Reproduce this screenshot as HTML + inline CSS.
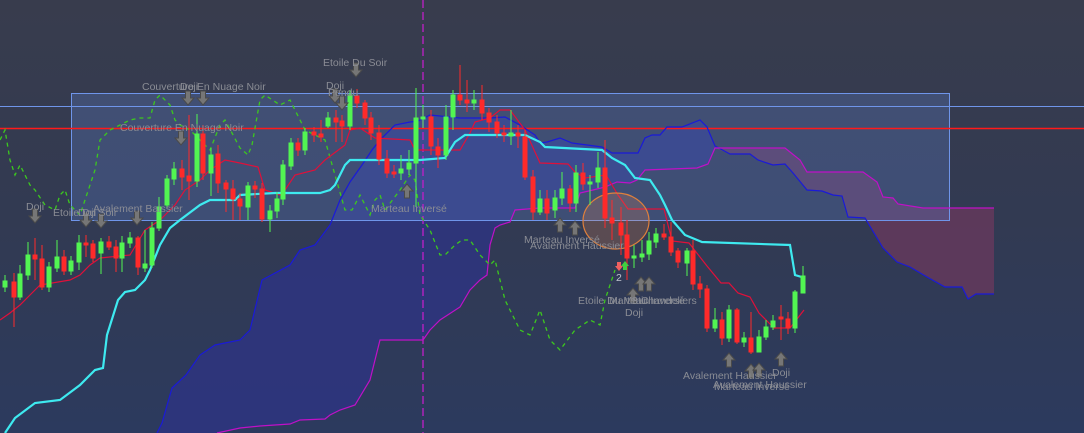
<!DOCTYPE html>
<html><head><meta charset="utf-8"><style>
html,body{margin:0;padding:0;background:#30374d;}
svg{display:block}
text{font-family:"Liberation Sans",sans-serif;font-size:10.5px;fill:#8a8c94}
</style></head><body>
<svg width="1084" height="433" viewBox="0 0 1084 433" xmlns="http://www.w3.org/2000/svg">
<defs>
<linearGradient id="bg" x1="0" y1="0" x2="0" y2="1">
<stop offset="0" stop-color="#383c4d"/><stop offset="0.5" stop-color="#323a52"/><stop offset="1" stop-color="#2c3a5e"/>
</linearGradient>
<path id="ad" d="M-2.5,0 H2.5 V7 H6 L0,14 L-6,7 H-2.5 Z" fill="#767676" stroke="#4a4a4a" stroke-width="1"/>
<path id="au" d="M-2.5,14 H2.5 V7 H6 L0,0 L-6,7 H-2.5 Z" fill="#767676" stroke="#4a4a4a" stroke-width="1"/>
</defs>
<rect width="1084" height="433" fill="url(#bg)"/>

<polygon fill="#2e3580" fill-opacity="0.85" points="157,433 162,423 172,388 186,375 200,355 215,345 240,340 250,330 262,280 290,265 300,250 315,245 330,225 340,200 350,182 362,165 372,150 380,140 395,125 410,122 418,121 430,115 460,118 475,118 490,118 505,117 520,125 535,135 540,143 547,142 560,138 572,143 602,147 612,153 638,153 645,138 652,135 660,135 667,127 682,127 700,120 707,127 715,146 715,148 708,164 697,168 645,170 637,180 630,183 617,182 605,187 593,190 580,193 575,208 540,208 515,210 510,222 500,225 495,228 490,245 487,275 480,280 470,290 460,307 440,320 430,330 423,340 380,340 370,380 355,405 340,410 330,415 325,419 300,420 290,424 260,426 240,428 217,433"/>
<polygon fill="#6b3a5e" fill-opacity="0.75" points="715,148 730,154 750,154 758,160 773,165 785,164 793,173 807,190 822,191 833,195 842,196 848,217 865,218 883,248 897,262 910,267 927,277 945,287 962,287 968,299 976,294 994,294 994,208 923,208 898,204 893,198 883,197 877,182 863,172 807,172 800,160 785,148"/>

<rect x="71.5" y="93.5" width="878" height="127" fill="#5a7ac0" fill-opacity="0.32" stroke="#6f95ea" stroke-width="1"/>
<line x1="0" y1="106.5" x2="1084" y2="106.5" stroke="#6f95ea" stroke-width="1"/>
<line x1="0" y1="128.5" x2="1084" y2="128.5" stroke="#ff1a1a" stroke-width="1.5"/>
<line x1="423" y1="0" x2="423" y2="433" stroke="#c020c8" stroke-width="1.3" stroke-dasharray="8,4"/>

<polyline fill="none" stroke="#1a1ad8" stroke-width="1.2" points="157,433 162,423 172,388 186,375 200,355 215,345 240,340 250,330 262,280 290,265 300,250 315,245 330,225 340,200 350,182 362,165 372,150 380,140 395,125 410,122 418,121 430,115 460,118 490,118 505,117 520,125 535,135 540,143 547,142 560,138 572,143 602,147 612,153 638,153 645,138 652,135 660,135 667,127 682,127 700,120 707,127 715,146 730,154 750,154 758,160 773,165 785,164 793,173 807,190 822,191 833,195 842,196 848,217 865,218 883,248 897,262 910,267 927,277 945,287 962,287 968,299 976,294 994,294"/>
<polyline fill="none" stroke="#c010c8" stroke-width="1.2" points="217,433 240,428 260,426 290,424 300,420 325,419 330,415 340,410 355,405 370,380 380,340 423,340 430,330 440,320 460,307 470,290 480,280 487,275 490,245 495,228 500,225 510,222 515,210 540,208 575,208 580,193 593,190 605,187 617,182 630,183 637,180 645,170 697,168 708,164 715,148 785,148 800,160 807,172 863,172 877,182 883,197 893,198 898,204 923,208 994,208"/>

<polyline fill="none" stroke="#3cc81e" stroke-width="1.3" stroke-dasharray="4,4" points="0,140 5,130 10,160 15,175 20,165 30,185 35,190 45,205 55,210 60,195 65,190 70,205 80,215 95,170 100,140 110,130 120,125 130,120 140,118 150,118 155,100 160,95 170,105 175,120 180,125 190,130 200,140 210,150 220,125 225,120 240,148 248,155 252,145 260,100 265,95 280,105 290,100 300,120 305,130 325,140 335,175 345,210 352,210 360,195 370,215 375,200 380,195 385,210 400,190 410,175 415,180 420,215 430,230 440,255 445,255 455,245 462,240 470,240 480,255 490,265 495,260 505,300 510,310 520,330 530,335 540,310 550,340 560,350 575,330 590,320 600,325 605,300 615,270"/>

<polyline fill="none" stroke="#e0103a" stroke-width="1.2" points="0,320 10,313 20,305 30,295 40,285 70,280 80,275 90,265 100,258 130,255 145,230 160,220 175,205 185,190 200,180 210,170 225,160 240,163 258,167 265,190 280,195 285,190 295,175 315,170 325,160 345,145 350,130 360,128 375,138 410,140 415,150 460,150 470,133 475,122 490,118 500,110 510,110 525,130 540,163 568,164 575,172 585,178 606,175 618,195 628,209 664,209 672,241 689,243 707,266 721,283 729,283 738,293 750,297 759,313 774,328 790,328 804,310"/>
<polyline fill="none" stroke="#3eeaf0" stroke-width="2.2" points="5,433 15,418 35,403 60,400 80,385 95,370 103,368 107,335 118,300 125,292 135,290 145,280 150,270 160,245 170,228 180,220 200,205 210,200 235,200 240,195 275,193 320,193 330,190 335,185 345,165 350,160 420,160 445,158 455,142 465,135 525,135 540,142 545,147 602,150 612,158 625,165 635,178 650,180 660,195 665,205 672,220 685,235 702,242 790,245 795,275 805,278"/>

<ellipse cx="616" cy="221" rx="33" ry="28" fill="#e88a50" fill-opacity="0.22" stroke="#e0803c" stroke-width="1.2"/>

<g stroke="#52f552" fill="#52f552" stroke-width="1">
<line x1="5" y1="275" x2="5" y2="292"/><rect x="3" y="281" width="4" height="6"/>
<line x1="20" y1="265" x2="20" y2="300"/><rect x="18" y="274" width="4" height="23"/>
<line x1="28" y1="242" x2="28" y2="280"/><rect x="26" y="255" width="4" height="20"/>
<line x1="49" y1="262" x2="49" y2="292"/><rect x="47" y="267" width="4" height="20"/>
<line x1="57" y1="240" x2="57" y2="272"/><rect x="55" y="257" width="4" height="11"/>
<line x1="71" y1="256" x2="71" y2="275"/><rect x="69" y="261" width="4" height="10"/>
<line x1="79" y1="235" x2="79" y2="270"/><rect x="77" y="243" width="4" height="19"/>
<line x1="101" y1="238" x2="101" y2="274"/><rect x="99" y="242" width="4" height="11"/>
<line x1="122" y1="236" x2="122" y2="272"/><rect x="120" y="243" width="4" height="15"/>
<line x1="130" y1="232" x2="130" y2="248"/><rect x="128" y="238" width="4" height="5"/>
<line x1="145" y1="230" x2="145" y2="272"/><rect x="143" y="264" width="4" height="4"/>
<line x1="152" y1="222" x2="152" y2="268"/><rect x="150" y="228" width="4" height="37"/>
<line x1="159" y1="197" x2="159" y2="231"/><rect x="157" y="207" width="4" height="21"/>
<line x1="167" y1="175" x2="167" y2="208"/><rect x="165" y="179" width="4" height="26"/>
<line x1="174" y1="162" x2="174" y2="185"/><rect x="172" y="169" width="4" height="10"/>
<line x1="197" y1="114" x2="197" y2="187"/><rect x="195" y="134" width="4" height="47"/>
<line x1="211" y1="148" x2="211" y2="196"/><rect x="209" y="155" width="4" height="18"/>
<line x1="248" y1="182" x2="248" y2="220"/><rect x="246" y="186" width="4" height="21"/>
<line x1="270" y1="205" x2="270" y2="232"/><rect x="268" y="211" width="4" height="8"/>
<line x1="277" y1="192" x2="277" y2="218"/><rect x="275" y="199" width="4" height="12"/>
<line x1="283" y1="160" x2="283" y2="205"/><rect x="281" y="165" width="4" height="34"/>
<line x1="291" y1="138" x2="291" y2="170"/><rect x="289" y="143" width="4" height="23"/>
<line x1="305" y1="128" x2="305" y2="155"/><rect x="303" y="132" width="4" height="18"/>
<line x1="328" y1="112" x2="328" y2="128"/><rect x="326" y="118" width="4" height="8"/>
<line x1="350" y1="90" x2="350" y2="130"/><rect x="348" y="95" width="4" height="31"/>
<line x1="401" y1="155" x2="401" y2="180"/><rect x="399" y="169" width="4" height="4"/>
<line x1="409" y1="150" x2="409" y2="175"/><rect x="407" y="163" width="4" height="6"/>
<line x1="416" y1="88" x2="416" y2="207"/><rect x="414" y="118" width="4" height="45"/>
<line x1="423" y1="105" x2="423" y2="128"/><rect x="421" y="117" width="4" height="2"/>
<line x1="446" y1="105" x2="446" y2="160"/><rect x="444" y="117" width="4" height="38"/>
<line x1="453" y1="90" x2="453" y2="130"/><rect x="451" y="95" width="4" height="22"/>
<line x1="474" y1="90" x2="474" y2="110"/><rect x="472" y="100" width="4" height="3"/>
<line x1="511" y1="110" x2="511" y2="145"/><rect x="509" y="133" width="4" height="3"/>
<line x1="540" y1="190" x2="540" y2="215"/><rect x="538" y="199" width="4" height="13"/>
<line x1="555" y1="190" x2="555" y2="218"/><rect x="553" y="198" width="4" height="12"/>
<line x1="562" y1="172" x2="562" y2="205"/><rect x="560" y="189" width="4" height="9"/>
<line x1="576" y1="165" x2="576" y2="212"/><rect x="574" y="173" width="4" height="30"/>
<line x1="590" y1="175" x2="590" y2="205"/><rect x="588" y="182" width="4" height="2"/>
<line x1="598" y1="152" x2="598" y2="188"/><rect x="596" y="168" width="4" height="14"/>
<line x1="634" y1="245" x2="634" y2="268"/><rect x="632" y="256" width="4" height="2"/>
<line x1="642" y1="240" x2="642" y2="262"/><rect x="640" y="254" width="4" height="3"/>
<line x1="649" y1="232" x2="649" y2="260"/><rect x="647" y="241" width="4" height="13"/>
<line x1="656" y1="228" x2="656" y2="248"/><rect x="654" y="234" width="4" height="8"/>
<line x1="687" y1="248" x2="687" y2="276"/><rect x="685" y="251" width="4" height="12"/>
<line x1="715" y1="308" x2="715" y2="332"/><rect x="713" y="320" width="4" height="8"/>
<line x1="729" y1="305" x2="729" y2="342"/><rect x="727" y="310" width="4" height="28"/>
<line x1="744" y1="332" x2="744" y2="347"/><rect x="742" y="338" width="4" height="4"/>
<line x1="759" y1="330" x2="759" y2="352"/><rect x="757" y="337" width="4" height="15"/>
<line x1="766" y1="320" x2="766" y2="340"/><rect x="764" y="327" width="4" height="10"/>
<line x1="773" y1="315" x2="773" y2="330"/><rect x="771" y="321" width="4" height="6"/>
<line x1="795" y1="290" x2="795" y2="333"/><rect x="793" y="292" width="4" height="36"/>
<line x1="803" y1="266" x2="803" y2="293"/><rect x="801" y="276" width="4" height="17"/>
</g>
<g stroke="#ff2a2a" fill="#ff2a2a" stroke-width="1">
<line x1="14" y1="273" x2="14" y2="327"/><rect x="12" y="282" width="4" height="15"/>
<line x1="35" y1="238" x2="35" y2="280"/><rect x="33" y="255" width="4" height="4"/>
<line x1="42" y1="245" x2="42" y2="290"/><rect x="40" y="259" width="4" height="28"/>
<line x1="64" y1="250" x2="64" y2="275"/><rect x="62" y="257" width="4" height="14"/>
<line x1="86" y1="235" x2="86" y2="257"/><rect x="84" y="243" width="4" height="2"/>
<line x1="93" y1="240" x2="93" y2="262"/><rect x="91" y="244" width="4" height="14"/>
<line x1="109" y1="236" x2="109" y2="250"/><rect x="107" y="242" width="4" height="5"/>
<line x1="116" y1="240" x2="116" y2="272"/><rect x="114" y="247" width="4" height="11"/>
<line x1="138" y1="236" x2="138" y2="275"/><rect x="136" y="238" width="4" height="29"/>
<line x1="182" y1="160" x2="182" y2="190"/><rect x="180" y="169" width="4" height="8"/>
<line x1="189" y1="115" x2="189" y2="200"/><rect x="187" y="176" width="4" height="5"/>
<line x1="203" y1="125" x2="203" y2="180"/><rect x="201" y="134" width="4" height="39"/>
<line x1="218" y1="145" x2="218" y2="193"/><rect x="216" y="154" width="4" height="29"/>
<line x1="226" y1="180" x2="226" y2="212"/><rect x="224" y="183" width="4" height="6"/>
<line x1="233" y1="180" x2="233" y2="220"/><rect x="231" y="189" width="4" height="10"/>
<line x1="240" y1="193" x2="240" y2="220"/><rect x="238" y="199" width="4" height="7"/>
<line x1="255" y1="181" x2="255" y2="198"/><rect x="253" y="186" width="4" height="3"/>
<line x1="262" y1="183" x2="262" y2="222"/><rect x="260" y="189" width="4" height="30"/>
<line x1="298" y1="138" x2="298" y2="156"/><rect x="296" y="143" width="4" height="7"/>
<line x1="314" y1="127" x2="314" y2="142"/><rect x="312" y="132" width="4" height="3"/>
<line x1="321" y1="120" x2="321" y2="142"/><rect x="319" y="134" width="4" height="3"/>
<line x1="336" y1="110" x2="336" y2="142"/><rect x="334" y="118" width="4" height="4"/>
<line x1="342" y1="115" x2="342" y2="142"/><rect x="340" y="121" width="4" height="5"/>
<line x1="357" y1="89" x2="357" y2="108"/><rect x="355" y="96" width="4" height="7"/>
<line x1="365" y1="100" x2="365" y2="125"/><rect x="363" y="103" width="4" height="15"/>
<line x1="371" y1="112" x2="371" y2="140"/><rect x="369" y="118" width="4" height="15"/>
<line x1="379" y1="125" x2="379" y2="165"/><rect x="377" y="133" width="4" height="26"/>
<line x1="387" y1="150" x2="387" y2="178"/><rect x="385" y="159" width="4" height="14"/>
<line x1="394" y1="165" x2="394" y2="178"/><rect x="392" y="172" width="4" height="2"/>
<line x1="431" y1="110" x2="431" y2="155"/><rect x="429" y="117" width="4" height="29"/>
<line x1="438" y1="138" x2="438" y2="168"/><rect x="436" y="147" width="4" height="8"/>
<line x1="460" y1="65" x2="460" y2="105"/><rect x="458" y="95" width="4" height="5"/>
<line x1="467" y1="80" x2="467" y2="112"/><rect x="465" y="100" width="4" height="3"/>
<line x1="482" y1="85" x2="482" y2="120"/><rect x="480" y="100" width="4" height="13"/>
<line x1="489" y1="108" x2="489" y2="132"/><rect x="487" y="113" width="4" height="9"/>
<line x1="497" y1="115" x2="497" y2="138"/><rect x="495" y="122" width="4" height="11"/>
<line x1="504" y1="125" x2="504" y2="142"/><rect x="502" y="133" width="4" height="2"/>
<line x1="518" y1="125" x2="518" y2="148"/><rect x="516" y="133" width="4" height="3"/>
<line x1="525" y1="130" x2="525" y2="180"/><rect x="523" y="137" width="4" height="40"/>
<line x1="533" y1="170" x2="533" y2="220"/><rect x="531" y="177" width="4" height="35"/>
<line x1="547" y1="190" x2="547" y2="220"/><rect x="545" y="199" width="4" height="14"/>
<line x1="570" y1="185" x2="570" y2="212"/><rect x="568" y="189" width="4" height="14"/>
<line x1="583" y1="163" x2="583" y2="190"/><rect x="581" y="173" width="4" height="11"/>
<line x1="605" y1="140" x2="605" y2="228"/><rect x="603" y="168" width="4" height="50"/>
<line x1="612" y1="200" x2="612" y2="240"/><rect x="610" y="218" width="4" height="5"/>
<line x1="621" y1="207" x2="621" y2="255"/><rect x="619" y="223" width="4" height="12"/>
<line x1="627" y1="220" x2="627" y2="280"/><rect x="625" y="235" width="4" height="23"/>
<line x1="664" y1="224" x2="664" y2="240"/><rect x="662" y="234" width="4" height="3"/>
<line x1="671" y1="222" x2="671" y2="256"/><rect x="669" y="237" width="4" height="15"/>
<line x1="678" y1="248" x2="678" y2="268"/><rect x="676" y="251" width="4" height="11"/>
<line x1="693" y1="240" x2="693" y2="290"/><rect x="691" y="251" width="4" height="33"/>
<line x1="700" y1="276" x2="700" y2="298"/><rect x="698" y="284" width="4" height="5"/>
<line x1="707" y1="285" x2="707" y2="332"/><rect x="705" y="289" width="4" height="39"/>
<line x1="722" y1="312" x2="722" y2="345"/><rect x="720" y="320" width="4" height="18"/>
<line x1="737" y1="308" x2="737" y2="344"/><rect x="735" y="310" width="4" height="32"/>
<line x1="751" y1="312" x2="751" y2="354"/><rect x="749" y="338" width="4" height="14"/>
<line x1="781" y1="305" x2="781" y2="340"/><rect x="779" y="317" width="4" height="2"/>
<line x1="788" y1="312" x2="788" y2="334"/><rect x="786" y="319" width="4" height="9"/>
</g>

<use href="#ad" x="35" y="209"/><use href="#ad" x="86" y="213"/><use href="#ad" x="101" y="214"/><use href="#ad" x="137" y="211"/>
<use href="#ad" x="181" y="131"/><use href="#ad" x="188" y="91"/><use href="#ad" x="203" y="91"/>
<use href="#ad" x="356" y="63"/><use href="#ad" x="335" y="89"/><use href="#ad" x="342" y="96"/>
<use href="#au" x="407" y="184"/><use href="#au" x="560" y="218"/><use href="#au" x="575" y="221"/>
<use href="#au" x="633" y="288"/><use href="#au" x="641" y="277"/><use href="#au" x="649" y="277"/>
<use href="#au" x="729" y="353"/><use href="#au" x="751" y="364"/><use href="#au" x="759" y="363"/><use href="#au" x="781" y="352"/>
<path d="M617,262 h4 v4 h2 l-4,5 l-4,-5 h2z" fill="#f06060"/>
<path d="M623,270 h4 v-4 h2 l-4,-5 l-4,5 h2z" fill="#40d040"/>
<text x="616" y="281" font-size="10" style="fill:#c0c4d0">2</text>

<text x="142" y="90">Couverture En Nuage Noir</text>
<text x="180" y="90">Doji</text>
<text x="323" y="66">Etoile Du Soir</text>
<text x="326" y="89">Doji</text>
<text x="328" y="96">Pendu</text>
<text x="120" y="131">Couverture En Nuage Noir</text>
<text x="26" y="210">Doji</text>
<text x="53" y="216">Etoile Du Soir</text>
<text x="78" y="216">Doji</text>
<text x="93" y="212">Avalement Baissier</text>
<text x="371" y="212">Marteau Inversé</text>
<text x="524" y="243">Marteau Inversé</text>
<text x="530" y="249">Avalement Haussier</text>
<text x="578" y="304">Etoile Du Matin</text>
<text x="609" y="304">Marteau Inversé</text>
<text x="632" y="304">3 Chandeliers</text>
<text x="625" y="316">Doji</text>
<text x="683" y="379">Avalement Haussier</text>
<text x="713" y="388">Avalement Haussier</text>
<text x="714" y="390">Marteau Inversé</text>
<text x="772" y="376">Doji</text>
</svg>
</body></html>
